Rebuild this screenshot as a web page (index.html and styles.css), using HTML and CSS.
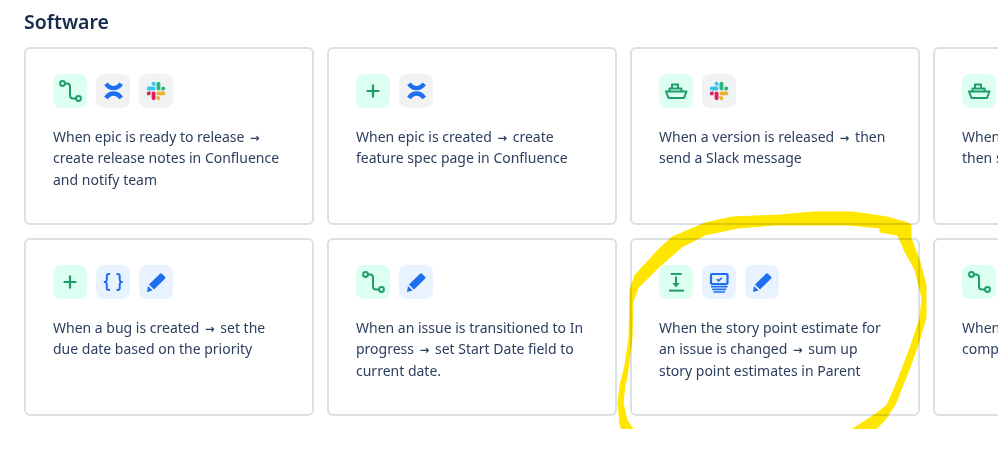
FILE: index.html
```html
<!DOCTYPE html>
<html lang="en">
<head>
  <meta charset="UTF-8">
  <title>Software templates</title>
  <link rel="stylesheet" href="styles.css">
</head>
<body>
  <!-- shared icons -->
  <svg class="defs" width="0" height="0">
    <symbol id="i-branch" viewBox="0 0 34 34">
      <g fill="none" stroke="#1f9d68" stroke-width="2">
        <circle cx="9.500" cy="9.500" r="2.400"/>
        <circle cx="25.500" cy="24.500" r="2.400"/>
        <path d="M12 9.500h2a3 3 0 0 1 3 3v9a3 3 0 0 0 3 3h3"/>
      </g>
    </symbol>
    <symbol id="i-plus" viewBox="0 0 34 34">
      <path d="M17 10.600v12.800M10.600 17h12.800" fill="none" stroke="#1f9d68" stroke-width="2.200"/>
    </symbol>
    <symbol id="i-ship" viewBox="0 0 34 34">
      <g fill="none" stroke="#1f9d68" stroke-width="2" stroke-linejoin="round">
        <path d="M7 17.500h20.500L25 24H9.500z"/>
        <path d="M10.500 17.500V14.500h12v3M13 14.500V10.500h6v4"/>
      </g>
    </symbol>
    <symbol id="i-download" viewBox="0 0 34 34">
      <g fill="#1f9d68">
        <rect x="11.700" y="8" width="11" height="1.900"/>
        <rect x="16" y="11.500" width="2" height="7.500"/>
        <path d="M13.300 18h7.400L17 22.600z"/>
        <rect x="10" y="24.600" width="15" height="2"/>
      </g>
    </symbol>
    <symbol id="i-confluence" viewBox="0 0 34 34">
      <g fill="none" stroke="#1d6ff0" stroke-width="4.400">
        <path d="M10 9.800C14 15.600 21 15.600 25.200 9.800"/>
        <path d="M10 24C14 18 21 18 25.200 24"/>
      </g>
    </symbol>
    <symbol id="i-slack" viewBox="-52 -52 231 231">
      <path fill="#E01E5A" d="M27.200 80c0 7.300-5.900 13.200-13.200 13.200S.8 87.300.8 80s5.900-13.200 13.200-13.200h13.200V80zm6.600 0c0-7.300 5.900-13.200 13.200-13.200s13.200 5.900 13.200 13.200v33c0 7.300-5.900 13.200-13.200 13.200s-13.200-5.900-13.200-13.200V80z"/>
      <path fill="#36C5F0" d="M47 27c-7.300 0-13.200-5.900-13.200-13.200S39.700.6 47 .6s13.200 5.900 13.200 13.200V27H47zm0 6.700c7.300 0 13.200 5.900 13.200 13.200s-5.900 13.200-13.200 13.200H13.900C6.600 60.100.7 54.200.7 46.900s5.900-13.200 13.200-13.200H47z"/>
      <path fill="#2EB67D" d="M99.900 46.900c0-7.300 5.900-13.200 13.200-13.200s13.200 5.900 13.200 13.200-5.900 13.200-13.200 13.200H99.900V46.900zm-6.600 0c0 7.300-5.900 13.200-13.200 13.200s-13.200-5.900-13.200-13.200V13.800C66.900 6.500 72.800.6 80.100.6s13.200 5.900 13.200 13.200v33.100z"/>
      <path fill="#ECB22E" d="M80.100 99.800c7.300 0 13.200 5.900 13.200 13.200s-5.900 13.200-13.200 13.200-13.200-5.900-13.200-13.200V99.800h13.200zm0-6.600c-7.300 0-13.200-5.900-13.200-13.200s5.900-13.200 13.200-13.200h33.100c7.300 0 13.200 5.900 13.200 13.200s-5.900 13.200-13.200 13.200H80.100z"/>
    </symbol>
    <symbol id="i-braces" viewBox="0 0 34 34">
      <path d="M14 9h-1.200a2 2 0 0 0-2 2v3.600A2.400 2.400 0 0 1 8 17a2.400 2.400 0 0 1 2.800 2.400V23a2 2 0 0 0 2 2H14M20.500 9h1.200a2 2 0 0 1 2 2v3.600a2.400 2.400 0 0 0 2.800 2.400 2.400 2.400 0 0 0-2.800 2.400V23a2 2 0 0 1-2 2h-1.200" fill="none" stroke="#1d6ff0" stroke-width="2"/>
    </symbol>
    <symbol id="i-pencil" viewBox="0 0 34 34">
      <g fill="#1d6ff0">
        <path d="M10 19.500L21 8.800q1-1 2 0l3 3q1 1 0 2L15 24.500z"/>
        <path d="M9 21l4.500 4.500L8 27z"/>
      </g>
    </symbol>
    <symbol id="i-monitor" viewBox="0 0 34 34">
      <rect x="9" y="9" width="16.500" height="10" rx="1" fill="none" stroke="#1d6ff0" stroke-width="2.200"/>
      <path d="M14.800 14l1.800 1.800 3.200-3" fill="none" stroke="#1d6ff0" stroke-width="1.600"/>
      <path d="M9 21.700h16.500M10.200 24.400h14M11.500 27h11.500" fill="none" stroke="#1d6ff0" stroke-width="1.700"/>
    </symbol>
  </svg>

  <h1 class="title">Software</h1>

  <div class="grid">
    <div class="card">
      <div class="icons">
        <span class="tile green"><svg><use href="#i-branch"/></svg></span>
        <span class="tile grey"><svg><use href="#i-confluence"/></svg></span>
        <span class="tile grey"><svg><use href="#i-slack"/></svg></span>
      </div>
      <p>When epic is ready to release <b>→</b> create release notes in Confluence and notify team</p>
    </div>
    <div class="card">
      <div class="icons">
        <span class="tile green"><svg><use href="#i-plus"/></svg></span>
        <span class="tile grey"><svg><use href="#i-confluence"/></svg></span>
      </div>
      <p>When epic is created <b>→</b> create feature spec page in Confluence</p>
    </div>
    <div class="card">
      <div class="icons">
        <span class="tile green"><svg><use href="#i-ship"/></svg></span>
        <span class="tile grey"><svg><use href="#i-slack"/></svg></span>
      </div>
      <p>When a version is released <b>→</b> then send a Slack message</p>
    </div>
    <div class="card">
      <div class="icons">
        <span class="tile green"><svg><use href="#i-ship"/></svg></span>
      </div>
      <p>When a version is released <b>→</b><br>then send an email</p>
    </div>

    <div class="card">
      <div class="icons">
        <span class="tile green"><svg><use href="#i-plus"/></svg></span>
        <span class="tile blue"><svg><use href="#i-braces"/></svg></span>
        <span class="tile blue"><svg><use href="#i-pencil"/></svg></span>
      </div>
      <p>When a bug is created <b>→</b> set the due date based on the priority</p>
    </div>
    <div class="card">
      <div class="icons">
        <span class="tile green"><svg><use href="#i-branch"/></svg></span>
        <span class="tile blue"><svg><use href="#i-pencil"/></svg></span>
      </div>
      <p>When an issue is transitioned to In progress <b>→</b> set Start Date field to current date.</p>
    </div>
    <div class="card">
      <div class="icons">
        <span class="tile green"><svg><use href="#i-download"/></svg></span>
        <span class="tile blue"><svg><use href="#i-monitor"/></svg></span>
        <span class="tile blue"><svg><use href="#i-pencil"/></svg></span>
      </div>
      <p>When the story point estimate for an issue is changed <b>→</b> sum up story point estimates in Parent</p>
    </div>
    <div class="card">
      <div class="icons">
        <span class="tile green"><svg><use href="#i-branch"/></svg></span>
      </div>
      <p>When all subtasks are<br>completed <b>→</b> close the parent</p>
    </div>
  </div>

  <!-- highlighter scribble drawn over the screenshot -->
  <svg class="scribble" width="998" height="429" viewBox="0 0 998 429">
    <path d="M911 225L908 223 887 217 853 212 813 212 780 215 732 217 705 223 672 237 658 250 635 275 630 290 629 338 625 365 620 385 618 403 620 425 623 432 636 432 633 429 627 420 623 403 625 385 627 378 632 338 633 302 638 288 658 268 682 247 705 235 738 228 775 225 800 225 847 225 880 228 880 232 897 235 899 238 905 252 915 270 922 298 920 318 910 348 897 382 887 405 877 413 848 432 873 432 885 420 895 405 907 375 917 348 926 318 926 285 920 262 911 238z"/>
  </svg>
</body>
</html>
```

FILE: styles.css
```css
html, body {
  margin: 0;
  height: 462px;
  overflow: hidden;
}

body {
  position: relative;
  background: #ffffff;
  font-family: "Noto Sans", sans-serif;
  color: #2c3e5d;
  padding: 0 0 0 24px;
}

.defs {
  display: block;
}

.title {
  margin: 0;
  padding-top: 8px;
  height: 47px;
  box-sizing: border-box;
  font-size: 19.5px;
  line-height: 28px;
  font-weight: 600;
  color: #172b4d;
}

.grid {
  display: grid;
  grid-template-columns: repeat(4, 290px);
  grid-auto-rows: 178px;
  gap: 13px;
}

.card {
  box-sizing: border-box;
  border: 2px solid #dcdfe4;
  border-radius: 6px;
  padding: 25px 27px;
}

.card p {
  margin: 18px 0 0;
  font-size: 14px;
  line-height: 21.33px;
}

/* the arrow between trigger and action */
.card b {
  font-family: "DejaVu Sans", sans-serif;
  font-size: 11.5px;
  font-weight: 700;
  line-height: 0;
  padding: 0 2px;
}

.icons {
  display: flex;
  gap: 9px;
}

.tile {
  width: 34px;
  height: 34px;
  border-radius: 8px;
  display: block;
}

.tile svg {
  display: block;
  width: 34px;
  height: 34px;
}

.green {
  background: #dcfff1;
}

.grey {
  background: #f1f2f4;
}

.blue {
  background: #e9f2ff;
}

.scribble {
  position: absolute;
  top: 0;
  left: 0;
  fill: #ffe600;
  stroke: #ffe600;
  stroke-width: 1;
  stroke-linejoin: round;
  mix-blend-mode: multiply;
  pointer-events: none;
}
```
